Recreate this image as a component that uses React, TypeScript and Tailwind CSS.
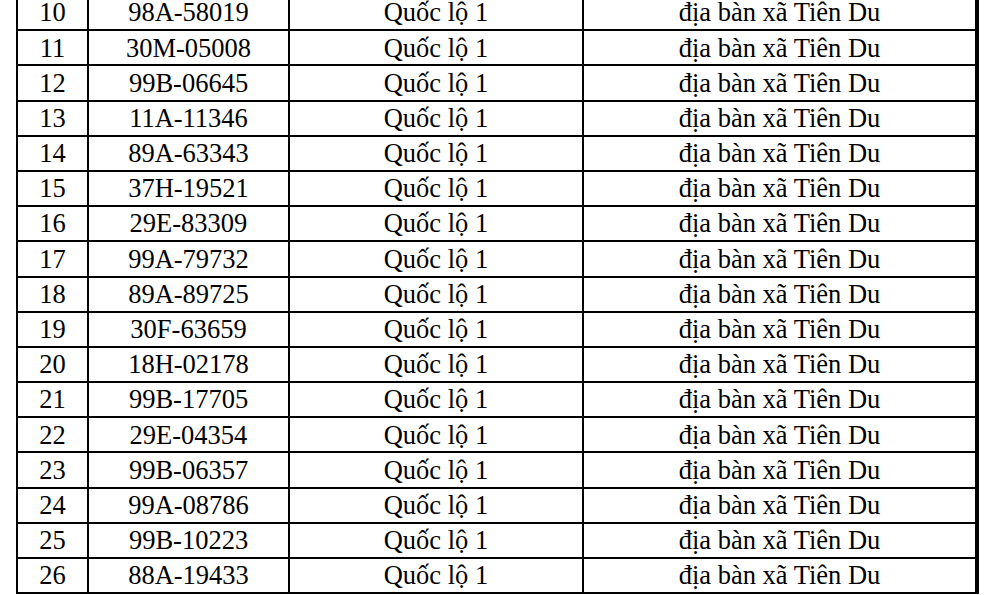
const rows: [number, string][] = [
  [10, "98A-58019"],
  [11, "30M-05008"],
  [12, "99B-06645"],
  [13, "11A-11346"],
  [14, "89A-63343"],
  [15, "37H-19521"],
  [16, "29E-83309"],
  [17, "99A-79732"],
  [18, "89A-89725"],
  [19, "30F-63659"],
  [20, "18H-02178"],
  [21, "99B-17705"],
  [22, "29E-04354"],
  [23, "99B-06357"],
  [24, "99A-08786"],
  [25, "99B-10223"],
  [26, "88A-19433"],
]

const App = () => {
  return (
    <div className="h-[595px] w-[992px] overflow-hidden bg-white font-['Liberation_Serif',serif] text-[26.5px] leading-none text-black">
      <table className="-mt-[6px] ml-[16px] w-[963px] table-fixed border-collapse border-r-4 border-black">
        <colgroup>
          <col className="w-[71px]" />
          <col className="w-[201px]" />
          <col className="w-[294px]" />
          <col />
        </colgroup>
        <tbody>
          {rows.map(([n, plate]) => (
            <tr key={n} className="h-[35.2px]">
              <td className="border-2 border-black p-0 text-center">{n}</td>
              <td className="border-2 border-black p-0 text-center">{plate}</td>
              <td className="border-2 border-black p-0 text-center">Quốc lộ 1</td>
              <td className="border-2 border-r-4 border-black p-0 text-center">địa bàn xã Tiên Du</td>
            </tr>
          ))}
        </tbody>
      </table>
    </div>
  )
}

export default App
